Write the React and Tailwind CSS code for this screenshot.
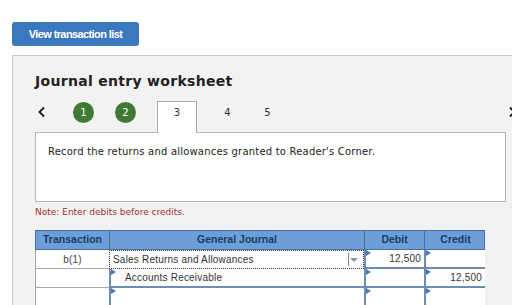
const Tri = () => (
  <span className="absolute left-0 top-0 w-0 h-0 border-t-[3px] border-b-[3px] border-l-[5px] border-t-transparent border-b-transparent border-l-[#4a79b5]" />
);

const InputCell = ({ children, align = "right", pl = "pl-1" }) => (
  <div
    className={`relative h-full bg-white border-l-2 border-b-2 border-[#6e8db5] flex items-center ${
      align === "right" ? "justify-end pr-[3px]" : `justify-start ${pl}`
    }`}
  >
    <Tri />
    {children}
  </div>
);

const TxCell = ({ children }) => (
  <div className="h-full bg-white border-l border-b border-[#a9a9a9] flex items-center justify-center text-[#444]">
    {children}
  </div>
);

export default function App() {
  return (
    <div className="w-[512px] h-[305px] overflow-hidden bg-white font-['DejaVu_Sans',sans-serif]">
      <div className="pt-[21px] pl-[12px]">
        <button className="h-[24px] w-[127px] rounded-[3px] bg-[#3c78c0] text-white text-[11px] font-bold tracking-[-0.6px] font-['Liberation_Sans',sans-serif]">
          View transaction list
        </button>
      </div>

      <div className="mt-[9px] ml-[12px] h-[300px] border-t border-l border-[#c9c9c9] bg-[#f2f2f2] pl-[22px] pt-[15px]">
        <h2 className="text-[14px] leading-[20px] font-bold text-[#222] tracking-[0.3px]">
          Journal entry worksheet
        </h2>

        <div className="mt-[10px] flex items-start h-[31px] text-[10px] text-[#333]">
          <div className="w-[23px] h-[22px] flex items-center pl-[2px]">
            <svg width="9" height="12" viewBox="0 0 9 12">
              <path d="M7 1.5 L2.5 6 L7 10.5" fill="none" stroke="#222" strokeWidth="2" />
            </svg>
          </div>
          <div className="ml-[15px] mt-[1px] w-[21px] h-[21px] rounded-full bg-[#3f7a35] text-white text-[10px] flex items-center justify-center">
            1
          </div>
          <div className="ml-[21px] mt-[1px] w-[21px] h-[21px] rounded-full bg-[#3f7a35] text-white text-[10px] flex items-center justify-center">
            2
          </div>
          <div className="ml-[21px] w-[40px] h-[32px] bg-white border border-b-0 border-[#a8a8a8] flex justify-center pt-[3px] relative z-10">
            3
          </div>
          <div className="w-[31px] h-[22px] ml-[15px] flex items-center justify-center">4</div>
          <div className="w-[31px] h-[22px] ml-[9px] flex items-center justify-center">5</div>
          <div className="ml-auto h-[22px] flex items-center">
            <svg width="9" height="12" viewBox="0 0 9 12" className="translate-x-[5px]">
              <path d="M2 1.5 L6.5 6 L2 10.5" fill="none" stroke="#222" strokeWidth="2" />
            </svg>
          </div>
        </div>

        <div className="w-[471px] h-[70px] bg-white border border-[#b5b5b5] pl-[12px] pt-[11px] text-[10px] tracking-[0.2px] text-[#222]">
          Record the returns and allowances granted to Reader's Corner.
        </div>

        <div className="mt-[4px] text-[9px] leading-[12px] text-[#a0302e]">
          Note: Enter debits before credits.
        </div>

        <div className="mt-[12px] w-[450px] font-['Liberation_Sans',sans-serif] text-[10px] tracking-[0.2px] text-[#333]">
          <div className="grid grid-cols-[74px_255px_60px_61px] h-[20px] bg-[#6c9fda] border border-[#4f6f98] text-[#1e3b63] text-[10.5px] tracking-normal font-bold">
            <div className="flex items-center justify-center border-r border-[#4f6f98]">Transaction</div>
            <div className="flex items-center justify-center border-r border-[#4f6f98]">General Journal</div>
            <div className="flex items-center justify-center border-r border-[#4f6f98]">Debit</div>
            <div className="flex items-center justify-center">Credit</div>
          </div>

          <div className="grid grid-cols-[74px_255px_60px_61px] h-[19px] border-r border-[#6e8db5]">
            <TxCell>b(1)</TxCell>
            <div className="h-full bg-white border border-dotted border-[#333] flex items-center pl-[3px] relative">
              <span>Sales Returns and Allowances</span>
              <div className="absolute right-[14px] top-[2px] bottom-[2px] w-px bg-[#888]" />
              <span className="absolute right-[5px] top-[7px] w-0 h-0 border-l-[4px] border-r-[4px] border-t-[4px] border-l-transparent border-r-transparent border-t-[#7f95b0]" />
            </div>
            <InputCell>12,500</InputCell>
            <InputCell />
          </div>

          <div className="grid grid-cols-[74px_255px_60px_61px] h-[19px] border-r border-[#6e8db5]">
            <TxCell />
            <InputCell align="left" pl="pl-[14px]">Accounts Receivable</InputCell>
            <InputCell />
            <InputCell>12,500</InputCell>
          </div>

          <div className="grid grid-cols-[74px_255px_60px_61px] h-[19px] border-r border-[#6e8db5]">
            <TxCell />
            <InputCell align="left" />
            <InputCell />
            <InputCell />
          </div>
        </div>
      </div>
    </div>
  );
}
